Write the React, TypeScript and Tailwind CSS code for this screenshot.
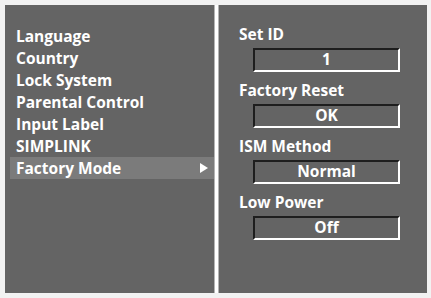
import React from "react"

const menu = ["Language", "Country", "Lock System", "Parental Control", "Input Label", "SIMPLINK", "Factory Mode"]

const settings = [
  { label: "Set ID", value: "1" },
  { label: "Factory Reset", value: "OK" },
  { label: "ISM Method", value: "Normal" },
  { label: "Low Power", value: "Off" },
]

export default function App() {
  return (
    <div
      className="w-[431px] h-[298px] bg-[#f2f2f2] flex pl-[5px] pt-[5px] pb-[5px] pr-[4px] text-white font-bold text-[15.5px]"
      style={{ fontFamily: '"Open Sans", "Liberation Sans", sans-serif' }}
    >
      {/* Left menu */}
      <div className="w-[210px] h-full bg-[#646464] border-r border-[#b4b4b4] pt-[20px] pl-[5px]">
        {menu.map((item, i) => {
          const active = i === menu.length - 1
          return (
            <div
              key={item}
              className={
                "h-[22px] leading-[22px] pl-[6px] pr-[6px] flex items-center justify-between " +
                (active ? "bg-[#7b7b7b]" : "")
              }
            >
              <span>{item}</span>
              {active && (
                <svg width="8" height="10" viewBox="0 0 8 10">
                  <path d="M0 0 L8 5 L0 10 Z" fill="#ffffff" />
                </svg>
              )}
            </div>
          )
        })}
      </div>

      {/* Divider */}
      <div className="w-[3px] h-full bg-white" />

      {/* Right settings */}
      <div className="flex-1 h-full bg-[#646464] border-l border-[#b4b4b4] pt-[19px] pl-[20px] flex flex-col gap-[8px]">
        {settings.map((s) => (
          <div key={s.label} className="flex flex-col">
            <div className="h-[20px] leading-[20px] mb-[4px]">{s.label}</div>
            <div className="ml-[14px] w-[147px] h-[24px] border-2 border-t-[#1e1e1e] border-l-[#1e1e1e] border-b-white border-r-white flex items-center justify-center leading-none">
              {s.value}
            </div>
          </div>
        ))}
      </div>
    </div>
  )
}
